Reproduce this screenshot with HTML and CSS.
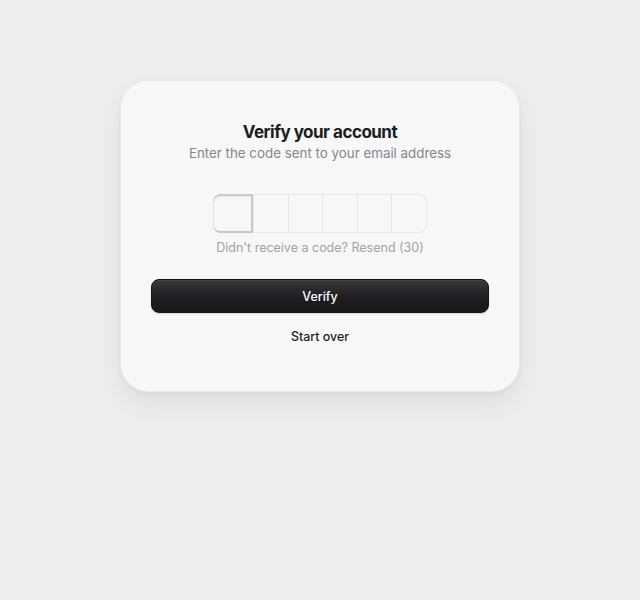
FILE: index.html
```html
<!DOCTYPE html>
<html lang="en">
<head>
<meta charset="utf-8">
<title>Verify your account</title>
<link rel="stylesheet" href="styles.css">
</head>
<body>
<main class="page">
  <section class="card">
    <header class="head">
      <h1 class="title">Verify your account</h1>
      <p class="subtitle">Enter the code sent to your email address</p>
    </header>
    <div class="otp">
      <div class="cell cell-focus"></div>
      <div class="cell"></div>
      <div class="cell"></div>
      <div class="cell"></div>
      <div class="cell"></div>
      <div class="cell"></div>
    </div>
    <p class="resend">Didn't receive a code? Resend (30)</p>
    <button class="btn-primary" type="button">Verify</button>
    <button class="btn-link" type="button">Start over</button>
  </section>
</main>
</body>
</html>
```
FILE: styles.css
```css
* { box-sizing: border-box; }
html, body { margin: 0; padding: 0; }
body {
  background: #eeeeee;
  font-family: Inter, "Noto Sans", "Liberation Sans", sans-serif;
  height: 600px;
}
.page {
  display: flex;
  justify-content: center;
  padding-top: 80px;
}
.card {
  width: 400px;
  height: 312px;
  background: #f7f7f7;
  border: 1px solid #e9e9e9;
  border-radius: 28px;
  box-shadow: 0 12px 28px rgba(0,0,0,0.07), 0 2px 4px rgba(0,0,0,0.04);
  padding: 40px 30px 0;
  display: flex;
  flex-direction: column;
  align-items: center;
}
.head { text-align: center; }
.title {
  margin: 0;
  font-size: 17px;
  line-height: 22px;
  font-weight: 700;
  letter-spacing: -0.03em;
  color: #1b1d24;
}
.subtitle {
  margin: 0;
  font-size: 13.35px;
  line-height: 20px;
  color: #85858c;
}
.otp {
  margin-top: 31px;
  width: 214px;
  height: 39px;
  display: flex;
  border: 1px solid #e8e8e8;
  border-radius: 8px;
}
.cell {
  flex: 1;
  border-left: 1px solid #e6e6e6;
}
.cell:first-child { border-left: none; }
.cell-focus {
  flex: 0 0 40px;
  margin: -1px 0 -1px -1px;
  border: 2px solid #c9c9c9;
  border-radius: 8px 0 0 8px;
  box-shadow: inset 0 1px 2px rgba(0,0,0,0.06);
}
.resend {
  margin: 6px 0 0;
  font-size: 12.5px;
  line-height: 18px;
  color: #a2a2a6;
}
.btn-primary {
  margin-top: 22px;
  width: 338px;
  height: 34px;
  border: 1px solid #151518;
  border-radius: 8px;
  background: linear-gradient(#38383d, #1c1c1f 60%, #1a1a1d);
  box-shadow: inset 0 1px 0 rgba(255,255,255,0.08), 0 1px 2px rgba(0,0,0,0.15);
  color: #ffffff;
  font-family: inherit;
  font-size: 12.4px;
  font-weight: 500;
}
.btn-link {
  margin-top: 15px;
  border: none;
  background: none;
  padding: 0;
  font-family: inherit;
  font-size: 12.4px;
  line-height: 18px;
  font-weight: 500;
  color: #1e1e22;
}
```
